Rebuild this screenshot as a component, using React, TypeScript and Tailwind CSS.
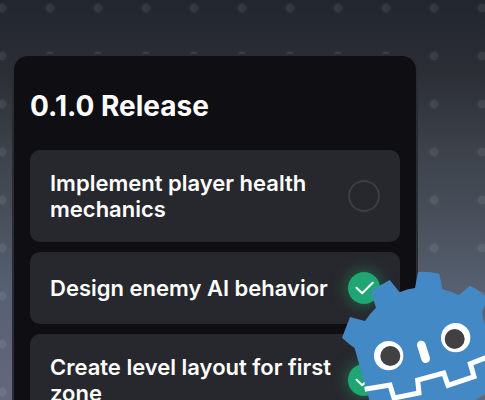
import React, { useState } from "react";

const initialTasks = [
  { id: "health", title: "Implement player health mechanics", done: false },
  { id: "enemy-ai", title: "Design enemy AI behavior", done: true },
  { id: "level", title: "Create level layout for first zone", done: true },
];

const Robot = () => {
  return (
    <svg
      className="pointer-events-none absolute right-0 bottom-0 h-[140px] w-[155px]"
      viewBox="0 0 465 420"
      fill="none"
      aria-hidden="true"
    >
      <path
        fill="#4289c6"
        d="M36 233L60 171L105 183Q119 161 138 143L123 96Q149 75 179 60L209 97Q231 87 255 84L264 36Q297 34 328 41L337 88Q363 93 386 106L420 77Q444 88 465 107V136Q456 150 457 164Q460 180 465 192V400Q452 411 436 420H118L74 265Q53 249 36 233Z"
      />
      <circle cx="176" cy="287" r="44" fill="#fff" />
      <circle cx="181" cy="288" r="30" fill="#414042" />
      <circle cx="377" cy="233" r="44" fill="#fff" />
      <circle cx="374" cy="237" r="30" fill="#414042" />
      <path
        d="M274 255L287 296"
        stroke="#fff"
        strokeWidth="26"
        strokeLinecap="round"
      />
      <path
        d="M104 388L180 375L192 414L267 399L263 360L341 339L354 376L432 350L421 311L470 292"
        stroke="#fff"
        strokeWidth="15"
      />
    </svg>
  );
};

const App = () => {
  const [tasks, setTasks] = useState(initialTasks);

  const toggle = (id: string) => {
    setTasks(tasks.map((t) => (t.id === id ? { ...t, done: !t.done } : t)));
  };

  return (
    <div className="relative h-screen overflow-hidden bg-[linear-gradient(to_bottom,#22262e_0%,#2b2e35_18%,#3d424b_38%,#49505b_55%,#566070_72%,#65677a_100%)] font-['Inter',sans-serif] text-white">
      <div className="h-full bg-[radial-gradient(circle,rgba(255,255,255,0.08)_4px,transparent_5px)] bg-size-[48px_48px] bg-position-[-22px_-16px] pt-14 pr-[69px] pl-[14px]">
        <section className="rounded-[14px] bg-[#0f0e13] px-4 pt-8 pb-4 shadow-[0_0_0_2px_#2a2c33]">
          <h2 className="mb-[26px] text-[28px] leading-9 font-bold">
            0.1.0 Release
          </h2>
          <ul className="space-y-[10px]">
            {tasks.map((task) => (
              <li key={task.id}>
                <label
                  htmlFor={task.id}
                  className="flex items-center justify-between gap-3 rounded-[10px] bg-[#27282d] p-5"
                >
                  <span className="text-[22px] leading-[26px] font-semibold">
                    {task.title}
                  </span>
                  <span className="grid shrink-0">
                    <input
                      id={task.id}
                      type="checkbox"
                      checked={task.done}
                      onChange={() => toggle(task.id)}
                      className="col-start-1 row-start-1 size-8 appearance-none rounded-full border-2 border-[#3d3e43] checked:border-0 checked:bg-[#20a672] checked:shadow-[0_0_16px_rgba(32,166,114,0.6)]"
                    />
                    {task.done && (
                      <svg
                        className="pointer-events-none col-start-1 row-start-1 size-8"
                        viewBox="0 0 32 32"
                        fill="none"
                        stroke="currentColor"
                        strokeWidth="2"
                        strokeLinecap="round"
                        strokeLinejoin="round"
                      >
                        <path d="M8.5 15.8L14.2 21.2L24.7 10.8" />
                      </svg>
                    )}
                  </span>
                </label>
              </li>
            ))}
          </ul>
        </section>
      </div>
      <Robot />
    </div>
  );
};

export default App;
